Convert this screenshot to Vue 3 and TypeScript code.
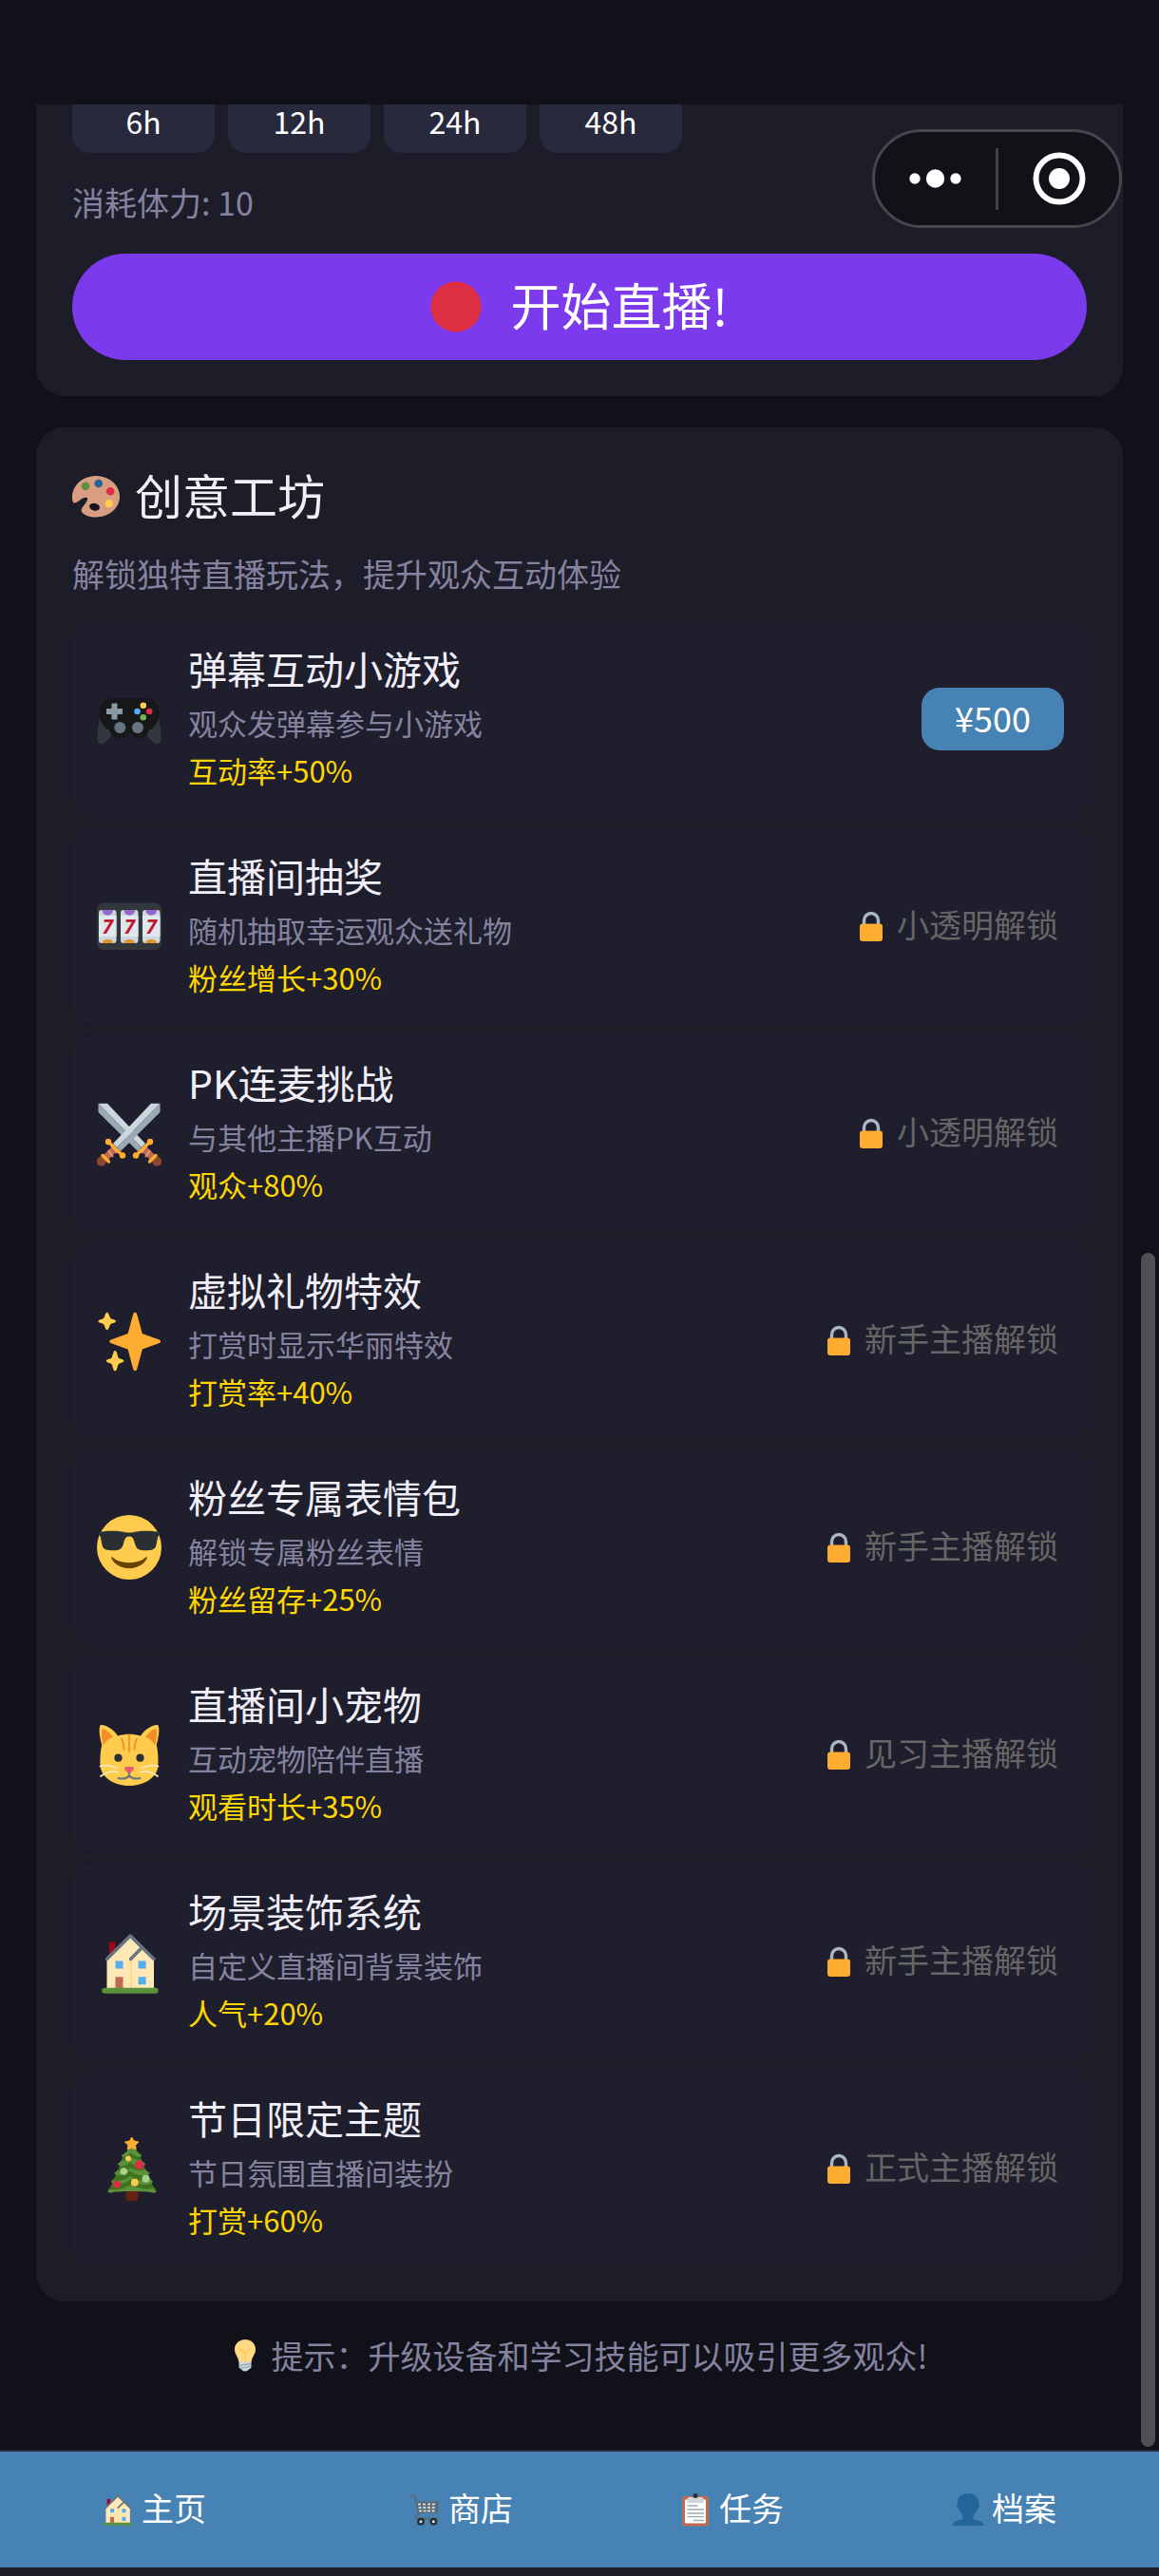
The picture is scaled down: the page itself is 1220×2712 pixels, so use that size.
<script setup lang="ts">
interface Feature {
  icon: string
  name: string
  desc: string
  bonus: string
  price?: number
  lock?: string
}

const durations: string[] = ['6h', '12h', '24h', '48h']

const features: Feature[] = [
  { icon: 'gamepad', name: '弹幕互动小游戏', desc: '观众发弹幕参与小游戏', bonus: '互动率+50%', price: 500 },
  { icon: 'slots', name: '直播间抽奖', desc: '随机抽取幸运观众送礼物', bonus: '粉丝增长+30%', lock: '小透明解锁' },
  { icon: 'swords', name: 'PK连麦挑战', desc: '与其他主播PK互动', bonus: '观众+80%', lock: '小透明解锁' },
  { icon: 'sparkles', name: '虚拟礼物特效', desc: '打赏时显示华丽特效', bonus: '打赏率+40%', lock: '新手主播解锁' },
  { icon: 'cool', name: '粉丝专属表情包', desc: '解锁专属粉丝表情', bonus: '粉丝留存+25%', lock: '新手主播解锁' },
  { icon: 'cat', name: '直播间小宠物', desc: '互动宠物陪伴直播', bonus: '观看时长+35%', lock: '见习主播解锁' },
  { icon: 'house', name: '场景装饰系统', desc: '自定义直播间背景装饰', bonus: '人气+20%', lock: '新手主播解锁' },
  { icon: 'tree', name: '节日限定主题', desc: '节日氛围直播间装扮', bonus: '打赏+60%', lock: '正式主播解锁' },
]

const reels: number[] = [2, 25, 48]
</script>

<template>
  <div class="page">
    <svg class="defs" width="0" height="0" aria-hidden="true">
      <symbol id="house" viewBox="0 0 70 70">
        <rect x="13" y="13.5" width="6.5" height="17" fill="#a0041e" />
        <path d="M10.5 31 35.2 7 60 31V62H10.5Z" fill="#ffe8b6" />
        <path d="M36 31V62" stroke="#ffd983" stroke-width="2" />
        <path d="M10.5 31.5 35.2 7 60 31.5" fill="none" stroke="#66757f" stroke-width="3.5" stroke-linecap="round" stroke-linejoin="round" />
        <path d="M35.5 31.5 47.4 19.5" stroke="#66757f" stroke-width="3.5" stroke-linecap="round" />
        <path d="M19.5 33.5h8v8h-8zM43.6 33.5h8v8h-8zM43.6 50.3h8v8h-8z" fill="#55acee" />
        <path d="M19.5 50.3h8V62h-8z" fill="#c1694f" />
        <rect x="5.3" y="61.7" width="59.4" height="6" rx="3" fill="#5c913b" />
      </symbol>
    </svg>

    <div class="capsule">
      <button type="button" class="capsule-btn" aria-label="更多">
        <svg width="56" height="56" viewBox="0 0 56 56" fill="#fff">
          <circle cx="6" cy="28" r="5.7" /><circle cx="27.5" cy="28" r="9.7" /><circle cx="49" cy="28" r="5.7" />
        </svg>
      </button>
      <span class="capsule-line"></span>
      <button type="button" class="capsule-btn" aria-label="关闭">
        <svg width="56" height="56" viewBox="0 0 56 56">
          <circle cx="28" cy="28" r="24.5" fill="none" stroke="#fff" stroke-width="6" />
          <circle cx="28" cy="28" r="11" fill="#fff" />
        </svg>
      </button>
    </div>

    <main class="content">
      <section class="card live">
        <div class="chips">
          <button v-for="d in durations" :key="d" type="button" class="chip">{{ d }}</button>
        </div>
        <p class="cost">消耗体力: 10</p>
        <button type="button" class="start">
          <svg width="54" height="54" viewBox="0 0 54 54" aria-hidden="true"><circle cx="27" cy="27" r="26.5" fill="#dd2e44" /></svg>
          <span>开始直播!</span>
        </button>
      </section>

      <section class="card workshop">
        <h2 class="title">
          <svg width="50" height="44" viewBox="0 0 50 44" aria-hidden="true">
            <path d="M25 0C11 0 0 10 0 22.500c0 2.300.300 4.200 1.200 5.400 1.400 1.400 3.600-.200 6.300-2 2.500-1.700 5.500-3.600 8.200-2.900 1.300 1.600-.600 4.300-2.600 7-1.900 2.600-4.200 5.300-3.300 7.500C12.500 41.500 18.500 43.500 25 43.500c14 0 25-9.700 25-21.700S39 0 25 0Z" fill="#d99e82" />
            <ellipse cx="23.500" cy="32.700" rx="5.500" ry="3.900" transform="rotate(12 23.500 32.700)" fill="#14141f" />
            <circle cx="14" cy="10.800" r="4.300" fill="#5c913b" /><circle cx="27.700" cy="8" r="4.300" fill="#226699" />
            <circle cx="40.200" cy="16.300" r="4.300" fill="#dd2e44" /><circle cx="38.800" cy="29" r="4.300" fill="#ffcc4d" />
          </svg>
          <span>创意工坊</span>
        </h2>
        <p class="subtitle">解锁独特直播玩法，提升观众互动体验</p>

        <ul class="list">
          <li v-for="f in features" :key="f.name" class="item">
            <svg class="icon" viewBox="0 0 68 68" aria-hidden="true">
              <g v-if="f.icon === 'gamepad'">
                <path d="M3 32C1.500 40 0 50 .500 56c.400 4.500 6 5.500 8.500 2L22 44 46 44 59 58c2.500 3.500 8.100 2.500 8.500-2 .500-6-1-16-2.500-24Z" fill="#31373d" />
                <path d="M17 12H51c9 0 14.500 7 14.500 16 0 8-4 15-10.500 17.500-1 4.500-5.500 8.500-11 8.500-4 0-7-2-8.500-5h-3C31 52 28 54 24 54c-5.500 0-10-4-11-8.500C6.500 43 2.500 36 2.500 28 2.500 19 8 12 17 12Z" fill="#151719" />
                <path d="M15.500 17.500h6v5.500l-3 3-3-3zM15.500 34.500h6V29l-3-3-3 3zM10 23v6h5.500l3-3-3-3zM27 23v6h-5.500l-3-3 3-3z" fill="#8899a6" />
                <circle cx="24.300" cy="43" r="6" fill="#66757f" /><circle cx="43" cy="43" r="6" fill="#66757f" />
                <circle cx="48.800" cy="19.700" r="3.300" fill="#ffcc4d" /><circle cx="55.200" cy="26" r="3.300" fill="#dd2e44" />
                <circle cx="48.800" cy="32.300" r="3.300" fill="#77b255" /><circle cx="42.500" cy="26" r="3.300" fill="#55acee" />
              </g>
              <g v-else-if="f.icon === 'slots'">
                <rect x="0" y="9.500" width="68" height="49.500" rx="7" fill="#31373d" />
                <g v-for="x in reels" :key="x">
                  <rect :x="x" y="17" width="18.500" height="35" rx="3" fill="#ccd6dd" />
                  <rect :x="x" y="23" width="18.500" height="22" fill="#e1e8ed" />
                  <path :d="`M${x + 3.500} 17h11.500c0 7.500-11.500 7.500-11.500 0z`" fill="#9266cc" />
                  <path :d="`M${x + 3.500} 52h11.500c0-5.500-11.500-5.500-11.500 0z`" fill="#e39225" />
                  <text :x="x + 9.200" y="42" text-anchor="middle" class="seven">7</text>
                </g>
              </g>
              <g v-else-if="f.icon === 'swords'">
                <g v-for="s in 2" :key="s" :transform="s === 1 ? 'matrix(-1 0 0 1 68 0)' : undefined">
                  <path d="M57 2.700h9.500L21 49l-4-4Z" fill="#ccd6dd" />
                  <path d="M66.500 2.700V12L25 53l-4-4Z" fill="#99aab5" />
                  <path d="M19 50 8 61" stroke="#c1694f" stroke-width="7" />
                  <path d="m16 48 5 7M12 52l5 7" stroke="#d99e82" stroke-width="2" />
                  <circle cx="4.800" cy="63.700" r="5" fill="#8a4633" />
                  <path d="m6 57.500 6.500 6.500" stroke="#ffac33" stroke-width="3.500" stroke-linecap="round" />
                  <path d="m12 43 15 14.500" stroke="#ffac33" stroke-width="3.500" />
                  <circle cx="12" cy="43" r="3.200" fill="#ffac33" /><circle cx="27" cy="57.500" r="3.200" fill="#ffac33" />
                </g>
              </g>
              <g v-else-if="f.icon === 'sparkles'">
                <path d="M40.200 4.700c1 0 1.600.600 2 1.800L47.800 27l18 6.600c1.700.800 1.700 2.600 0 3.400l-18 6.600-5.600 21c-.800 2.200-3.200 2.200-4 0l-5.600-21-18-6.600c-1.700-.800-1.700-2.600 0-3.400l18-6.600L38.200 6.500c.400-1.200 1-1.800 2-1.800Z" fill="#ffac33" />
                <path d="M10.700 4.800c.700 0 1.200.500 1.600 1.500l2 4.700 4.800 1.700c1.200.600 1.200 2 0 2.600L14.300 17l-2 4.700c-.700 1.900-2.500 1.900-3.200 0L7.100 17l-4.800-1.700c-1.200-.600-1.200-2 0-2.600L7.100 11l2-4.700c.400-1 .900-1.500 1.600-1.500ZM19.100 45c.700 0 1.200.500 1.600 1.500l2 6.200 4.800 1.700c1.200.600 1.200 2 0 2.600l-4.800 1.900-2 6.200c-.700 1.900-2.500 1.900-3.200 0l-2-6.200-4.800-1.900c-1.200-.600-1.200-2 0-2.600l4.800-1.700 2-6.200c.400-1 .900-1.500 1.600-1.500Z" fill="#ffcc4d" />
              </g>
              <g v-else-if="f.icon === 'cool'">
                <circle cx="34" cy="34" r="34" fill="#ffcc4d" />
                <path d="M2.500 18C12 16 25 16.500 31 18.500h6C43 16.500 56 16 65.500 18c.800.800.500 3-.500 3.800-1.500 1-1.600 8-3.200 11.700C60 37 56 37.200 51 37.200c-7 0-9.200-1.500-10.800-6.500C39 27 38.500 22.500 34 22.500S29 27 27.800 30.700C26.200 35.700 24 37.200 17 37.200c-5 0-9-.200-10.800-3.700C4.600 29.800 4.500 22.800 3 21.800c-1-.800-1.300-3-.500-3.800Z" fill="#292f33" />
                <path d="M16.500 44.500c8 7.500 27 7.500 35 0 1-.600 1.800.200 1.200 1.500C45 59.500 23 59.500 15.300 46c-.600-1.300.200-2.100 1.200-1.500Z" fill="#664500" />
              </g>
              <g v-else-if="f.icon === 'cat'">
                <path d="M3.500 3.500C6 1.500 17 6.500 22 14.500c7-2.500 17-2.500 24 0C51 6.500 62 1.500 64.500 3.500c1.800 4 .500 13-1.800 20.500C64.500 31 65 41 64 49 61 60 48 67 34 67S7 60 4 49C3 41 3.500 31 5.300 24 3 16.500 1.700 7.500 3.500 3.500Z" fill="#ffcc4d" />
                <path d="M5.500 7C9 7 14.500 12 17 16c-4 1-8 4.500-10 8.500C5 18 4.500 11 5.500 7ZM62.500 7C59 7 53.500 12 51 16c4 1 8 4.500 10 8.500 2-6.500 2.500-13.500 1.500-17.500Z" fill="#f18f26" />
                <path d="M34 14v17M26 17.500c2 4 2.500 7 2.500 11.500M42 17.500c-2 4-2.500 7-2.500 11.500" fill="none" stroke="#f18f26" stroke-width="1.800" stroke-linecap="round" />
                <circle cx="22.500" cy="37.700" r="4.100" fill="#292f33" /><circle cx="45.500" cy="37.700" r="4.100" fill="#292f33" />
                <path d="M31 47h6c2 0 2.500 1.500 1.500 3L35.500 53.500q-1.500 1.500-3 0L29.500 50c-1-1.500-.500-3 1.500-3Z" fill="#e75a70" />
                <path d="M34 54v2.500q-4 4.500-11.500 2.500M34 56.500q4 4.500 11.500 2.500" fill="none" stroke="#66757f" stroke-width="2" stroke-linecap="round" />
                <path d="M3.500 46.500Q13 44 21 48.500M4 57q8-6.500 18-4.500M64.500 46.500Q55 44 47 48.500M64 57q-8-6.500-18-4.500" fill="none" stroke="#fee7b8" stroke-width="1.800" stroke-linecap="round" />
              </g>
              <use v-else-if="f.icon === 'house'" href="#house" width="70" height="70" />
              <g v-else>
                <rect x="30.500" y="56" width="13" height="12" rx="3" fill="#662113" />
                <path d="M37 9c5 7 7 9 9.500 10.500 1.500 1-1 2.500-1 2.500 1.500 4 3 5 5.500 7 .500 1-2 2-2 2 1 4 4 6 6.500 7.500.500 1-1.500 2-1.500 2 1 4 3 5 5 7.500-1 1.500-1.500 1.500-1.500 1.500 1 3 4 6 5 8.500 0 2-3 1.500-3 1.500-10-2-37-2-45 0 0 0-3 .500-3-1.500 1-2.500 4-5.500 5-8.500 0 0-.500 0-1.500-1.500 2-2.500 4-3.500 5-7.500 0 0-2-1-1.500-2 2.500-1.500 4.500-3.500 5.500-7.500 0 0-2.500-1-2-2 2.500-2 4-3 5.500-7 0 0-2.500-1.500-1-2.500C30 18 32 16 37 9Z" fill="#5c913b" />
                <path d="M28 21.500q4-1 8-4 4 5 9.500 4l1.500 4q-7 0-10-3-5 4-10.500 3.500ZM24.500 31.500q6 0 11-4 6 6 13.500 3.500l2 4q-9 3-15.500-2-6 5-13.500 3.500ZM20 41q9 1 15-4.500 8 7 18.500 4l2.500 5q-12 3-20.500-3.500-8 6-18 4.500ZM15.500 50.500q11 2 20-5 10 8 22 4.500l2.500 4.500q-13 3-24-3.500-10 6.500-22.500 5Z" fill="#3e721d" />
                <path d="m36.700 1 2.200 4 5 1-3.400 3.500.700 4.500-4.500-2-4.500 2 .700-4.500L29.500 6l5-1Z" fill="#ffac33" stroke="#ffac33" stroke-linejoin="round" />
                <circle cx="33" cy="23.500" r="3" fill="#ffcc4d" /><circle cx="44.700" cy="30.300" r="4.700" fill="#dd2e44" />
                <circle cx="28.300" cy="37" r="3.800" fill="#a6d388" /><circle cx="51.500" cy="44.700" r="4" fill="#a6d388" />
                <circle cx="39.800" cy="48.700" r="3.900" fill="#ffcc4d" /><circle cx="21" cy="50.700" r="3.900" fill="#dd2e44" />
              </g>
            </svg>
            <div class="info">
              <h3 class="name">{{ f.name }}</h3>
              <p class="desc">{{ f.desc }}</p>
              <p class="bonus">{{ f.bonus }}</p>
            </div>
            <button v-if="f.price" type="button" class="buy">¥{{ f.price }}</button>
            <span v-else class="locked">
              <svg width="36" height="36" viewBox="0 0 36 36" aria-hidden="true">
                <path d="M10.500 19v-7a7.500 7.500 0 0 1 15 0v7" fill="none" stroke="#aab8c2" stroke-width="3.400" />
                <rect x="6" y="15.500" width="24" height="18.500" rx="3" fill="#ffac33" />
              </svg>
              <span>{{ f.lock }}</span>
            </span>
          </li>
        </ul>
      </section>

      <p class="tip">
        <svg width="40" height="36" viewBox="0 0 40 36" aria-hidden="true">
          <path d="M20 1C13.500 1 9 5.500 9 11.500c0 5 3.800 7.500 4.500 13.500h13c.700-6 4.500-8.500 4.500-13.500C31 5.500 26.500 1 20 1Z" fill="#ffd983" />
          <path d="m15 11 5 4.500 5-4.500M20 15.500V25" fill="none" stroke="#ffcc4d" stroke-width="1.600" stroke-linecap="round" />
          <path d="M13.500 24.500h13V30c0 1.500-2.500 2-3.500 3.500q-3 2-6 0C16 32 13.500 31.500 13.500 30Z" fill="#ccd6dd" />
          <path d="m14 28.500 12-2M15 31.500l10-2" stroke="#99aab5" stroke-width="1.300" />
        </svg>
        <span>提示：升级设备和学习技能可以吸引更多观众!</span>
      </p>
    </main>

    <div class="scrollbar"></div>

    <nav class="tabs">
      <button type="button" class="tab">
        <svg width="36" height="36" viewBox="0 0 70 70" aria-hidden="true"><use href="#house" width="70" height="70" /></svg>
        <span>主页</span>
      </button>
      <button type="button" class="tab">
        <svg width="36" height="36" viewBox="0 0 36 36" aria-hidden="true">
          <path d="M8 9.500h25l-1.500 12.500H11Z" fill="#5b6a74" />
          <path d="M11 11.500h3v2h-3zM16 11.500h3v2h-3zM21 11.500h3v2h-3zM26 11.500h3v2h-3zM11.500 15h3v2h-3zM16.300 15h3v2h-3zM21 15h3v2h-3zM25.700 15h3v2h-3zM12 18.500h3v2h-3zM16.600 18.500h3v2h-3zM21 18.500h3v2h-3zM25.500 18.500h3v2h-3z" fill="#ccd6dd" />
          <path d="M3 3.500h4.500L12 23q-3.500 1-3.500 3 0 1.500 2 1.500H32" fill="none" stroke="#5b6a74" stroke-width="1.800" stroke-linecap="round" stroke-linejoin="round" />
          <circle cx="14" cy="30.700" r="2.700" fill="#e1e8ed" stroke="#292f33" stroke-width="2.400" />
          <circle cx="27.300" cy="30.700" r="2.700" fill="#e1e8ed" stroke="#292f33" stroke-width="2.400" />
        </svg>
        <span>商店</span>
      </button>
      <button type="button" class="tab">
        <svg width="36" height="36" viewBox="0 0 36 36" aria-hidden="true">
          <rect x="4" y="4" width="28" height="31.500" rx="3" fill="#c1694f" />
          <rect x="7" y="7.500" width="22" height="25" rx="1" fill="#fff" />
          <circle cx="18" cy="3.500" r="2.500" fill="#292f33" />
          <path d="M12 5h3q3 2 6 0h3q2.500 0 2.500 2v4h-17V7q0-2 2.500-2Z" fill="#ccd6dd" />
          <path d="M9.500 14h11M9.500 18h17.500M9.500 22h17.500M9.500 25.700h17.500M16 29.500h11" stroke="#99aab5" stroke-width="1.300" />
        </svg>
        <span>任务</span>
      </button>
      <button type="button" class="tab">
        <svg width="36" height="36" viewBox="0 0 36 36" aria-hidden="true">
          <path d="M18 1c7 0 11 4 11 10 .800.500 1 1.500.800 3-.300 1.800-.900 2.800-1.900 3.200-.900 3.300-2.500 5.300-4.400 6.800v2.500c0 1.800 2 2.300 5 3 4 .900 6 2.500 6 5.500H1.500c0-3 2-4.600 6-5.500 3-.700 5-1.200 5-3V24c-1.900-1.500-3.500-3.500-4.400-6.800-1-.400-1.600-1.400-1.900-3.200-.200-1.500 0-2.500.800-3C7 5 11 1 18 1Z" fill="#226699" />
        </svg>
        <span>档案</span>
      </button>
    </nav>
    <div class="home-strip"></div>
  </div>
</template>

<style>
body {
  background: #11111a;
}
</style>

<style scoped>
.page {
  position: relative;
  display: flex;
  flex-direction: column;
  box-sizing: border-box;
  min-height: 100vh;
  padding-top: 110px;
  background: #11111a;
  color: #f0eef8;
  font-family: "Noto Sans CJK SC", sans-serif;
  font-size: 34px;
  line-height: 48px;
}
.defs {
  position: absolute;
}
h2, h3, p, ul {
  margin: 0;
  padding: 0;
  font-weight: 400;
}
button {
  box-sizing: border-box;
  padding: 0;
  border: 0;
  background: none;
  color: #fff;
  font: inherit;
  cursor: pointer;
}
svg {
  flex: none;
  display: block;
}
.capsule {
  position: absolute;
  z-index: 2;
  top: 136px;
  right: 39px;
  display: flex;
  align-items: center;
  box-sizing: border-box;
  width: 263px;
  height: 104px;
  border: 3px solid #47464f;
  border-radius: 52px;
  background: #111118;
}
.capsule-btn {
  flex: 1;
  display: flex;
  justify-content: center;
}
.capsule-line {
  width: 3px;
  height: 65px;
  background: #434248;
}
.content {
  padding: 0 38px;
}
.card {
  padding: 38px;
  border-radius: 30px;
  background: #1d1c29;
}
.live {
  padding-top: 0;
  border-radius: 0 0 30px 30px;
}
.chips {
  display: flex;
  gap: 14px;
}
.chip {
  width: 150px;
  height: 51px;
  padding-bottom: 17px;
  border-radius: 0 0 19px 19px;
  background: #29293d;
  font-size: 32px;
  line-height: 34px;
}
.cost {
  margin: 28px 0 30px;
  color: #8583a0;
}
.start {
  display: flex;
  align-items: center;
  justify-content: center;
  gap: 30px;
  width: 100%;
  height: 112px;
  border-radius: 56px;
  background: #7c3aed;
  font-size: 53px;
}
.start span,
.title span {
  padding-bottom: 6px;
}
.workshop {
  margin-top: 33px;
}
.title {
  display: flex;
  align-items: center;
  gap: 16px;
  font-size: 50px;
  line-height: 64px;
}
.subtitle {
  margin: 22px 0 27px;
  color: #8583a0;
}
.list {
  display: flex;
  flex-direction: column;
  gap: 14px;
  list-style: none;
}
.item {
  display: flex;
  align-items: center;
  box-sizing: border-box;
  min-height: 204px;
  padding: 20px 24px 20px 26px;
  border-radius: 20px;
  background: #1f1e2d;
}
.icon {
  width: 68px;
  height: 68px;
  overflow: visible;
}
.seven {
  fill: #be1931;
  font: italic bold 21px "Open Sans", sans-serif;
}
.info {
  flex: 1;
  margin-left: 28px;
}
.name {
  margin-bottom: 8px;
  font-size: 41px;
  line-height: 50px;
}
.desc,
.bonus {
  font-size: 31px;
  line-height: 50px;
}
.desc {
  color: #8583a0;
}
.bonus {
  color: #ffd700;
}
.buy {
  width: 150px;
  height: 66px;
  padding-bottom: 5px;
  border-radius: 19px;
  background: #4682b4;
  font-size: 36px;
}
.locked {
  display: flex;
  align-items: center;
  gap: 9px;
  padding-right: 6px;
  color: #666;
}
.locked span,
.tab span {
  padding-bottom: 4px;
}
.tip {
  display: flex;
  align-items: center;
  justify-content: center;
  gap: 8px;
  margin: 33px 0;
  padding-right: 6px;
  color: #8583a0;
}
.scrollbar {
  position: absolute;
  right: 4px;
  top: 1319px;
  bottom: 136px;
  width: 15px;
  border-radius: 8px;
  background: #504f54;
}
.tabs {
  display: grid;
  grid-template-columns: 323fr 323fr 247fr 327fr;
  height: 122px;
  margin-top: auto;
  border-top: 2px solid #2a2a3e;
  background: #4682b4;
}
.tab {
  display: flex;
  align-items: center;
  justify-content: center;
  gap: 7px;
}
.home-strip {
  height: 9px;
  background: #1d1c29;
}
</style>
